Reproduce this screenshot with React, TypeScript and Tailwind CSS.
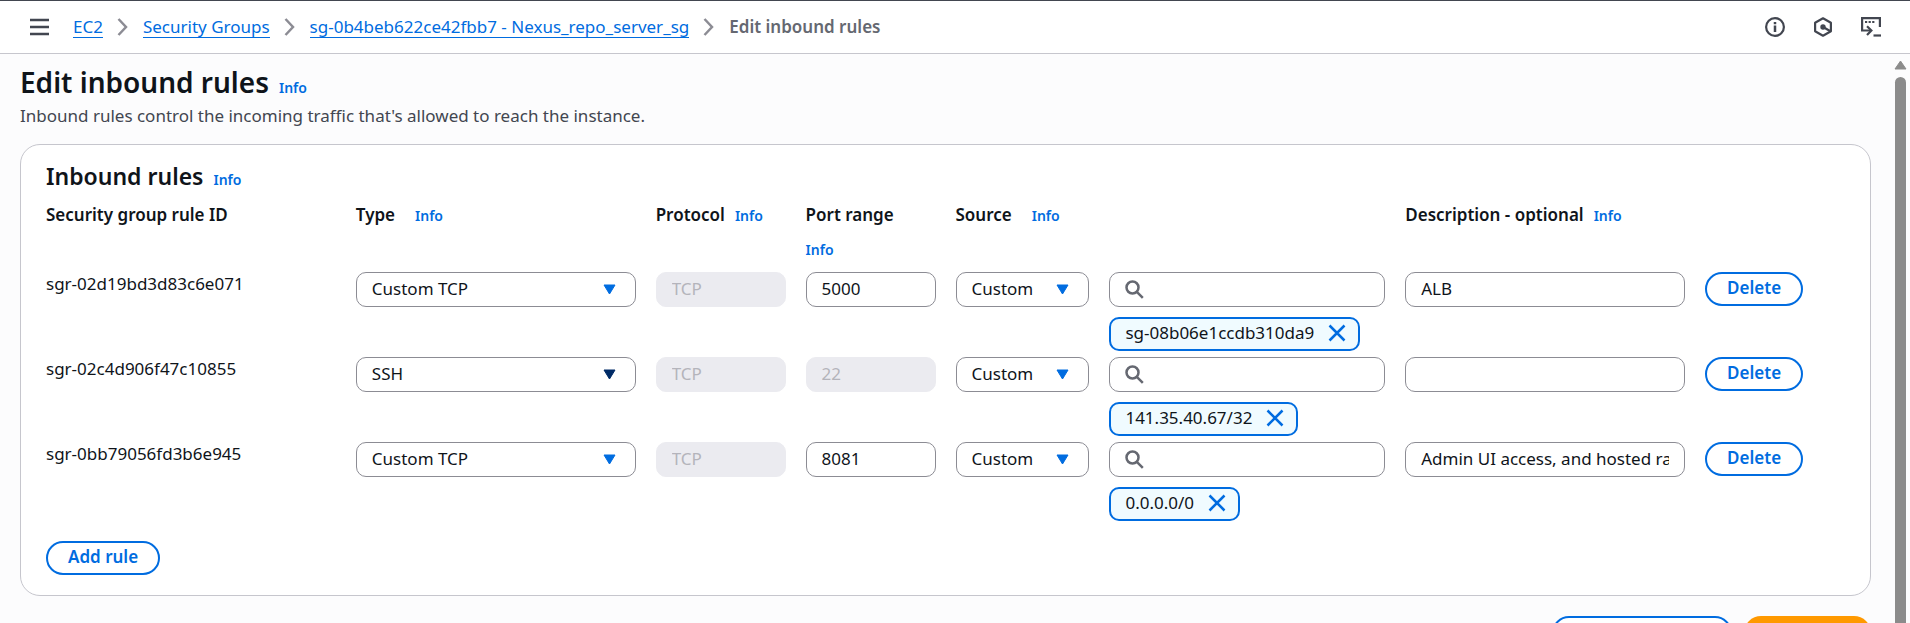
import React from "react";

const columns =
  "grid grid-cols-[minmax(0,290fr)_minmax(0,280fr)_minmax(0,130fr)_minmax(0,130fr)_minmax(0,134fr)_minmax(0,276fr)_minmax(0,280fr)_minmax(0,140fr)] gap-x-5";

const fieldBase = "h-[35px] w-full rounded-[10px] border px-[15px] pb-0.5 text-[17px] leading-5";
const fieldActive = "border-[#8c8c94] bg-white text-[#0f141a]";
const fieldDisabled = "border-[#ebebf0] bg-[#ebebf0] text-[#b4b4bb]";

const outlineButton =
  "h-[34px] rounded-full border-2 border-[#006ce0] bg-white pb-0.5 text-[17px] leading-5 font-semibold text-[#006ce0]";

interface Rule {
  id: string;
  type: string;
  protocol: string;
  port: string;
  portLocked: boolean;
  typeFocused: boolean;
  source: string;
  description: string;
}

const rules: Rule[] = [
  { id: "sgr-02d19bd3d83c6e071", type: "Custom TCP", protocol: "TCP", port: "5000", portLocked: false, typeFocused: false, source: "sg-08b06e1ccdb310da9", description: "ALB" },
  { id: "sgr-02c4d906f47c10855", type: "SSH", protocol: "TCP", port: "22", portLocked: true, typeFocused: true, source: "141.35.40.67/32", description: "" },
  { id: "sgr-0bb79056fd3b6e945", type: "Custom TCP", protocol: "TCP", port: "8081", portLocked: false, typeFocused: false, source: "0.0.0.0/0", description: "Admin UI access, and hosted raw repository" },
];

function Info({ className = "" }: { className?: string }) {
  return (
    <a href="#info" className={`text-sm font-semibold text-[#006ce0] ${className}`}>
      Info
    </a>
  );
}

function Chevron() {
  return (
    <svg className="size-5 shrink-0" viewBox="0 0 20 20" fill="none" stroke="#8c8c94" strokeWidth="2.5" aria-hidden="true">
      <path d="M5.500 2 13 10l-7.500 8" />
    </svg>
  );
}

function Select({ label, value, options, dark = false }: { label: string; value: string; options: string[]; dark?: boolean }) {
  return (
    <div className="relative">
      <select aria-label={label} defaultValue={value} className={`${fieldBase} ${fieldActive} appearance-none`}>
        {options.map((o) => (
          <option key={o}>{o}</option>
        ))}
      </select>
      <svg
        className={`pointer-events-none absolute top-3 right-5 h-[11px] w-[13px] ${dark ? "text-[#002b66]" : "text-[#006ce0]"}`}
        viewBox="0 0 13 11"
        fill="currentColor"
        stroke="currentColor"
        strokeLinejoin="round"
        aria-hidden="true"
      >
        <path d="M1 1h11L6.500 10z" />
      </svg>
    </div>
  );
}

function HeaderCell({ children, info = "" }: { children: React.ReactNode; info?: string }) {
  return (
    <th scope="col" className="text-left text-[17px] leading-[35px] font-semibold whitespace-nowrap">
      {children}
      {info && <Info className={info} />}
    </th>
  );
}

function RuleRow({ rule }: { rule: Rule }) {
  return (
    <tr className={`${columns} h-[85px]`}>
      <td className="text-[17px] leading-6">{rule.id}</td>
      <td>
        <Select label={`Type for ${rule.id}`} value={rule.type} options={["Custom TCP", "SSH"]} dark={rule.typeFocused} />
      </td>
      <td>
        <input aria-label={`Protocol for ${rule.id}`} disabled defaultValue={rule.protocol} className={`${fieldBase} ${fieldDisabled}`} />
      </td>
      <td>
        <input
          aria-label={`Port range for ${rule.id}`}
          disabled={rule.portLocked}
          defaultValue={rule.port}
          className={`${fieldBase} ${rule.portLocked ? fieldDisabled : fieldActive}`}
        />
      </td>
      <td>
        <Select label={`Source for ${rule.id}`} value="Custom" options={["Custom", "My IP"]} />
      </td>
      <td>
        <div className="relative">
          <input type="text" aria-label={`Search source for ${rule.id}`} className={`${fieldBase} ${fieldActive} pl-11`} />
          <svg className="pointer-events-none absolute top-2 left-4 size-5" viewBox="0 0 20 20" fill="none" stroke="#656871" strokeWidth="2.5" aria-hidden="true">
            <circle cx="7.500" cy="7.500" r="6" />
            <path d="m11.800 11.800 6 6" />
          </svg>
        </div>
        <span className="mt-2.5 inline-flex h-[34px] items-center gap-3.5 rounded-[10px] border-2 border-[#006ce0] bg-[#f0fbff] pr-3 pb-0.5 pl-3.5 text-[17px] leading-5">
          {rule.source}
          <button type="button" aria-label={`Remove ${rule.source}`}>
            <svg className="size-[18px]" viewBox="0 0 18 18" fill="none" stroke="#006ce0" strokeWidth="2.500" aria-hidden="true">
              <path d="m1.500 1.500 15 15m0-15-15 15" />
            </svg>
          </button>
        </span>
      </td>
      <td>
        <input type="text" aria-label={`Description for ${rule.id}`} defaultValue={rule.description} className={`${fieldBase} ${fieldActive}`} />
      </td>
      <td>
        <button type="button" className={`${outlineButton} px-5`}>
          Delete
        </button>
      </td>
    </tr>
  );
}

function TopBar() {
  const link = "border-b border-[#006ce0] text-[#006ce0] leading-5";
  return (
    <header className="flex h-[54px] shrink-0 items-center justify-between border-t border-b border-t-[#424650] border-b-[#c6c6cd] bg-white pr-[29px] pl-[30px]">
      <div className="flex items-center gap-6">
        <button type="button" aria-label="Open navigation">
          <svg className="h-[18px] w-[19px]" viewBox="0 0 19 18" stroke="#424650" strokeWidth="2.500" aria-hidden="true">
            <path d="M0 2h19M0 9h19M0 16h19" />
          </svg>
        </button>
        <nav aria-label="Breadcrumb" className="flex items-center gap-2.5 text-[17px]">
          <a href="#ec2" className={link}>EC2</a>
          <Chevron />
          <a href="#security-groups" className={link}>Security Groups</a>
          <Chevron />
          <a href="#group" className={link}>sg-0b4beb622ce42fbb7 - Nexus_repo_server_sg</a>
          <Chevron />
          <span className="font-semibold text-[#656871]">Edit inbound rules</span>
        </nav>
      </div>
      <div className="flex items-center gap-7">
        <button type="button" aria-label="Information">
          <svg className="size-5" viewBox="0 0 20 20" fill="none" stroke="#424650" strokeWidth="2.200" aria-hidden="true">
            <circle cx="10" cy="10" r="8.900" />
            <path d="M10 8.600V15M10 5v2.200" strokeWidth="2.500" />
          </svg>
        </button>
        <button type="button" aria-label="Assistant">
          <svg className="size-5" viewBox="0 0 20 20" fill="none" stroke="#424650" strokeWidth="2.200" strokeLinejoin="round" aria-hidden="true">
            <path d="M17.900 14.300V5.700L10 1.300 2.100 5.700v8.600L10 18.700z" />
            <circle cx="10" cy="10" r="2.700" fill="#424650" stroke="none" />
            <path d="m10 10 7.500 4.300" strokeWidth="2.200" />
          </svg>
        </button>
        <button type="button" aria-label="CloudShell">
          <svg className="size-5" viewBox="0 0 20 20" fill="none" stroke="#424650" strokeWidth="2.200" aria-hidden="true">
            <path d="M18.900 10V1.100H1.100v12.400H10" />
            <path d="M4 5h2.200M7.600 5h2.200M11.200 5h2.200" strokeWidth="2" />
            <path d="m6 9.200 4.400 4.300L6 18" />
            <path d="M12.500 18.500H20" />
          </svg>
        </button>
      </div>
    </header>
  );
}

export default function App() {
  return (
    <div className="flex h-screen flex-col overflow-hidden bg-[#fcfcfd] font-['Noto_Sans',sans-serif] text-[#0f141a]">
      <TopBar />
      <div className="flex min-h-0 flex-1">
        <main className="min-w-0 flex-1 overflow-hidden px-5 pt-2.5">
          <h1 className="text-[28px] leading-9 font-semibold">
            Edit inbound rules
            <Info className="ml-2.5" />
          </h1>
          <p className="mt-1 text-[17px] leading-6 text-[#424650]">
            Inbound rules control the incoming traffic that's allowed to reach the instance.
          </p>
          <section className="mt-4 rounded-[20px] border border-[#c6c6cd] bg-white px-[25px] pt-4 pb-5">
            <h2 className="text-[23px] leading-[30px] font-semibold">
              Inbound rules
              <Info className="ml-2.5" />
            </h2>
            <table className="mt-1.5 block w-full">
              <thead className="block">
                <tr className={`${columns} h-[75px]`}>
                  <HeaderCell>Security group rule ID</HeaderCell>
                  <HeaderCell info="ml-5">Type</HeaderCell>
                  <HeaderCell info="ml-2.5">Protocol</HeaderCell>
                  <HeaderCell info="block leading-[35px]">Port range</HeaderCell>
                  <HeaderCell info="ml-5">Source</HeaderCell>
                  <td />
                  <HeaderCell info="ml-2.5">Description - optional</HeaderCell>
                  <td />
                </tr>
              </thead>
              <tbody className="block">
                {rules.map((rule) => (
                  <RuleRow key={rule.id} rule={rule} />
                ))}
              </tbody>
            </table>
            <button type="button" className={`${outlineButton} mt-3.5 px-5`}>
              Add rule
            </button>
          </section>
          <div className="mt-5 flex justify-end gap-3">
            <button type="button" aria-label="Preview changes" className={`${outlineButton} w-[180px]`} />
            <button type="button" aria-label="Save rules" className="h-[34px] w-[127px] rounded-full bg-[#ff9900]" />
          </div>
        </main>
        <div className="flex w-[19px] shrink-0 flex-col items-center gap-[7px] pt-1.5" aria-hidden="true">
          <svg className="h-2.5 w-[13px]" viewBox="0 0 13 10" fill="#8b8b8b" stroke="#8b8b8b" strokeLinejoin="round">
            <path d="M1 9h11L6.500 1z" />
          </svg>
          <div className="w-[11px] flex-1 rounded-t-full bg-[#8b8b8b]" />
        </div>
      </div>
    </div>
  );
}
